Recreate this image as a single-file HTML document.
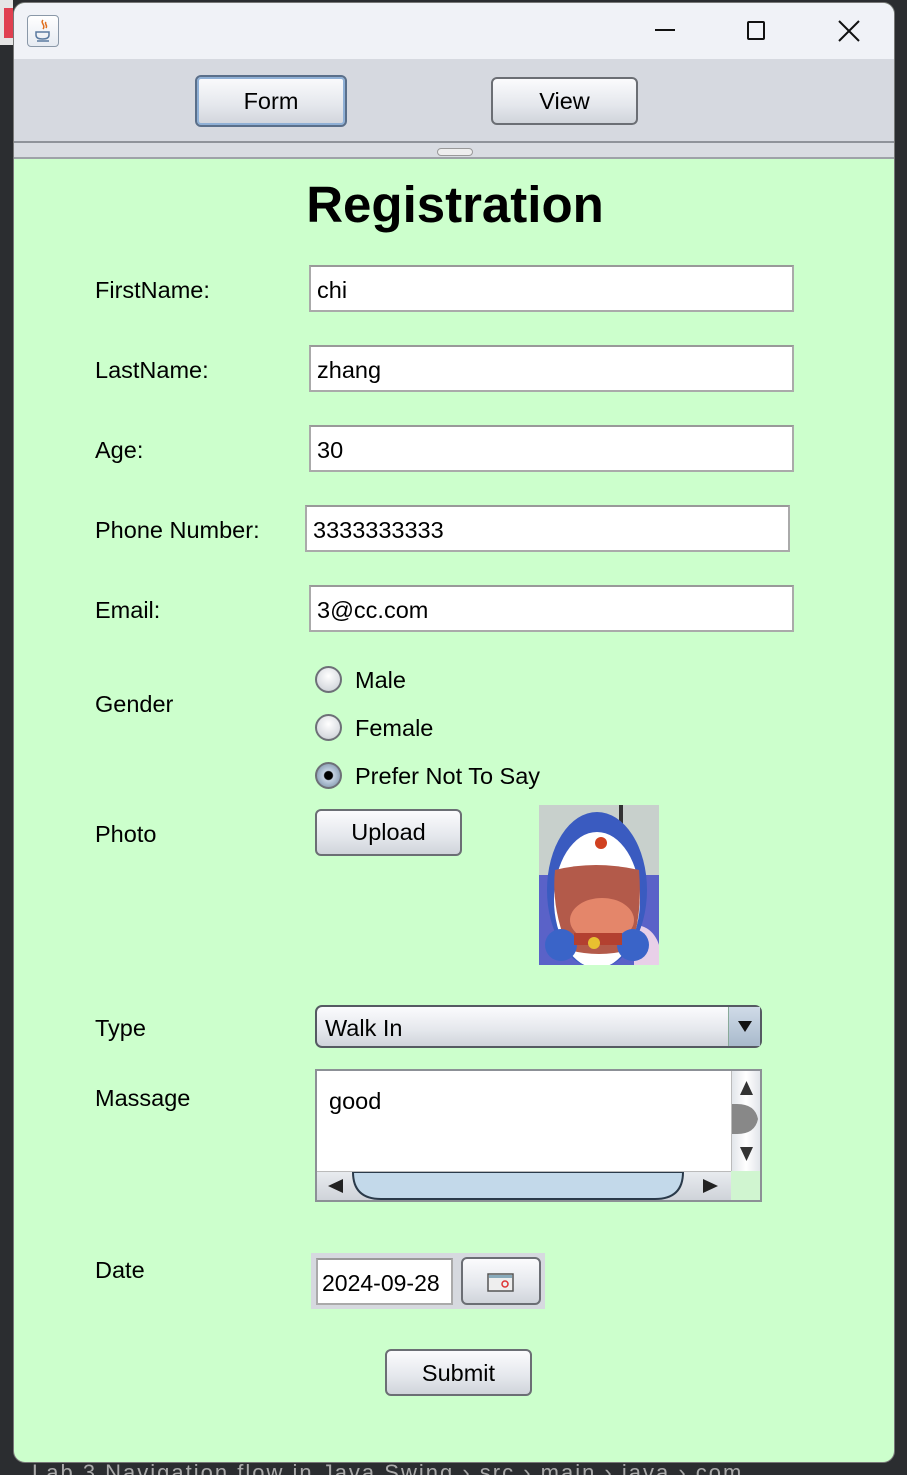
<!DOCTYPE html>
<html><head><meta charset="utf-8"><style>
*{box-sizing:border-box;margin:0;padding:0}
html,body{width:907px;height:1475px;overflow:hidden;background:#2b2d30;font-family:"Liberation Sans",Arial,sans-serif}
.a{position:absolute}
.win{left:13px;top:2px;width:882px;height:1461px;border-radius:12px;overflow:hidden;background:#ccffcc;border:1px solid #777}
.title{left:0;top:0;width:882px;height:56px;background:#f0f2f7}
.tool{left:0;top:56px;width:882px;height:84px;background:#d6d9e0;border-bottom:2px solid #8f939a}
.split{left:0;top:140px;width:882px;height:16px;background:#d9dce2;border-bottom:2px solid #9ea2a8}
.btn{border:2px solid #6b6e74;border-radius:6px;background:linear-gradient(#fbfbfd,#e4e7ec 60%,#d0d4db);font-size:23.5px;text-align:center;color:#000}
.lbl{font-size:23.5px;color:#000;left:81px}
.tf{background:#fff;border:2px solid #aaa;border-top-color:#999;font-size:23.5px;padding-left:6px;line-height:46px;height:47px;width:485px}
.rb{width:27px;height:27px;border-radius:50%;border:2px solid #6d7077;background:radial-gradient(circle at 50% 35%,#fff,#d8dbe0 70%,#b9bcc2)}
.rt{font-size:23.5px}
</style></head><body>
<div class="a" style="left:0;top:0;width:13px;height:45px;background:#e5e5e5"></div>
<div class="a" style="left:4px;top:8px;width:9px;height:30px;background:#e04050"></div>
<div class="a win">
 <div class="a title">
  <div class="a" style="left:13px;top:12px;width:32px;height:32px;border:1px solid #8a98a8;border-radius:4px;background:linear-gradient(#fff,#e6ebf2)">
   <svg width="30" height="30" viewBox="0 0 30 30"><path d="M15 4c-3 3 3 5 0 9M18 6c-2 2 2 3 0 6" stroke="#e07020" stroke-width="1.5" fill="none"/><path d="M8 16h13v3c0 3-3 4-6.5 4S8 22 8 19z M9 25h12" stroke="#5a7aa0" stroke-width="1.5" fill="none"/></svg>
  </div>
  <div class="a" style="left:641px;top:26px;width:20px;height:2px;background:#111"></div>
  <div class="a" style="left:733px;top:18px;width:18px;height:19px;border:2px solid #111;border-radius:2px"></div>
  <svg class="a" style="left:824px;top:17px" width="22" height="22"><path d="M1 1L21 21M21 1L1 21" stroke="#111" stroke-width="2"/></svg>
 </div>
 <div class="a tool">
  <div class="a btn" style="left:181px;top:16px;width:152px;height:52px;border-color:#5a6f8a;box-shadow:0 0 0 2px #8fb0d6 inset;line-height:48px">Form</div>
  <div class="a btn" style="left:477px;top:18px;width:147px;height:48px;line-height:44px">View</div>
 </div>
 <div class="a split"><div class="a" style="left:423px;top:5px;width:36px;height:8px;border:1px solid #999;border-radius:4px;background:#eee"></div></div>

 <div class="a" style="left:0;top:172px;width:882px;text-align:center;font-size:51px;font-weight:bold">Registration</div>

 <div class="a lbl" style="top:274px">FirstName:</div>
 <div class="a tf" style="left:295px;top:262px">chi</div>
 <div class="a lbl" style="top:354px">LastName:</div>
 <div class="a tf" style="left:295px;top:342px">zhang</div>
 <div class="a lbl" style="top:434px">Age:</div>
 <div class="a tf" style="left:295px;top:422px">30</div>
 <div class="a lbl" style="top:514px">Phone Number:</div>
 <div class="a tf" style="left:291px;top:502px">3333333333</div>
 <div class="a lbl" style="top:594px">Email:</div>
 <div class="a tf" style="left:295px;top:582px">3@cc.com</div>

 <div class="a lbl" style="top:688px">Gender</div>
 <div class="a rb" style="left:301px;top:663px"></div><div class="a rt" style="left:341px;top:664px">Male</div>
 <div class="a rb" style="left:301px;top:711px"></div><div class="a rt" style="left:341px;top:712px">Female</div>
 <div class="a rb" style="left:301px;top:759px;background:radial-gradient(circle,#000 0 4px,#c5d3e3 5px,#8fa3b9 12px)"></div><div class="a rt" style="left:341px;top:760px">Prefer Not To Say</div>

 <div class="a lbl" style="top:818px">Photo</div>
 <div class="a btn" style="left:301px;top:806px;width:147px;height:47px;line-height:43px">Upload</div>
 <svg class="a" style="left:525px;top:802px" width="120" height="160" viewBox="0 0 120 160">
  <rect width="120" height="160" fill="#c8d0cc"/><rect y="70" width="120" height="90" fill="#5a62c8"/>
  <path d="M95 120c20 0 25 20 25 20v20H95z" fill="#e8d0e8"/>
  <rect x="80" y="0" width="4" height="20" fill="#333"/>
  <ellipse cx="58" cy="85" rx="50" ry="78" fill="#3a5bc0"/>
  <ellipse cx="58" cy="95" rx="43" ry="68" fill="#fff"/>
  <path d="M16 65q40-10 84 0q4 50-10 80q-30 8-60 0q-18-40-14-80z" fill="#b35a4a"/>
  <ellipse cx="63" cy="115" rx="32" ry="22" fill="#e4866a"/>
  <circle cx="62" cy="38" r="6" fill="#d04020"/>
  <circle cx="22" cy="140" r="16" fill="#3a64c8"/><circle cx="94" cy="140" r="16" fill="#3a64c8"/>
  <rect x="35" y="128" width="48" height="12" fill="#b34030"/>
  <circle cx="55" cy="138" r="6" fill="#e8c030"/>
 </svg>

 <div class="a lbl" style="top:1012px">Type</div>
 <div class="a btn" style="left:301px;top:1002px;width:447px;height:43px;text-align:left;padding-left:8px;line-height:42px;border-color:#555a62;border-radius:7px">Walk In
  <div class="a" style="right:0;top:0;width:32px;height:39px;background:linear-gradient(#d0dbe8,#a9bacc);border-left:1px solid #8a9"><svg width="32" height="39"><path d="M9 14h14l-7 11z" fill="#111"/></svg></div>
 </div>

 <div class="a lbl" style="top:1082px">Massage</div>
 <div class="a" style="left:301px;top:1066px;width:447px;height:133px;border:2px solid #8c9096;background:#d0f5d0">
  <div class="a" style="left:0;top:0;width:414px;height:100px;background:#fff;font-size:23.5px;padding:17px 12px">good</div>
  <div class="a" style="left:414px;top:0;width:29px;height:100px;background:linear-gradient(90deg,#e2e5ea,#fff,#e2e5ea);border-left:1px solid #bbb">
   <svg width="29" height="100"><path d="M8 24h13L14.5 10z M8 76h13l-6.5 14z" fill="#333"/><path d="M0 33h5q18 0 21 15q-3 15-21 15H0z" fill="#888"/></svg>
  </div>
  <div class="a" style="left:0;top:100px;width:414px;height:29px;background:linear-gradient(#e8ebef,#cfd3d9);border-top:1px solid #bbb">
   <svg width="414" height="29"><path d="M26 7v14L11 14z M386 7v14l15-7z" fill="#222"/><path d="M36 0q0 27 28 27h274q28 0 28-27z" fill="#c3d9ea" stroke="#2a3a4a" stroke-width="2"/></svg>
  </div>
 </div>

 <div class="a lbl" style="top:1254px">Date</div>
 <div class="a" style="left:297px;top:1250px;width:234px;height:56px;background:#d6d9df"></div>
 <div class="a tf" style="left:302px;top:1255px;width:137px;height:47px;padding-left:4px;font-size:23px">2024-09-28</div>
 <div class="a btn" style="left:447px;top:1254px;width:80px;height:48px">
  <svg width="76" height="44"><rect x="25" y="15" width="25" height="17" fill="#eee" stroke="#555" stroke-width="1.5"/><rect x="26" y="16" width="23" height="3" fill="#8ab"/><circle cx="42" cy="25" r="3" fill="none" stroke="#d33" stroke-width="1.5"/></svg>
 </div>

 <div class="a btn" style="left:371px;top:1346px;width:147px;height:47px;line-height:45px">Submit</div>
</div>
<div class="a" style="left:0;top:1463px;width:907px;height:12px;color:#aaa;font-size:22px;line-height:20px;padding-left:32px;white-space:nowrap;overflow:hidden;letter-spacing:2px">Lab 3 Navigation flow in Java Swing  ›  src  ›  main  ›  java  ›  com</div>
</body></html>
